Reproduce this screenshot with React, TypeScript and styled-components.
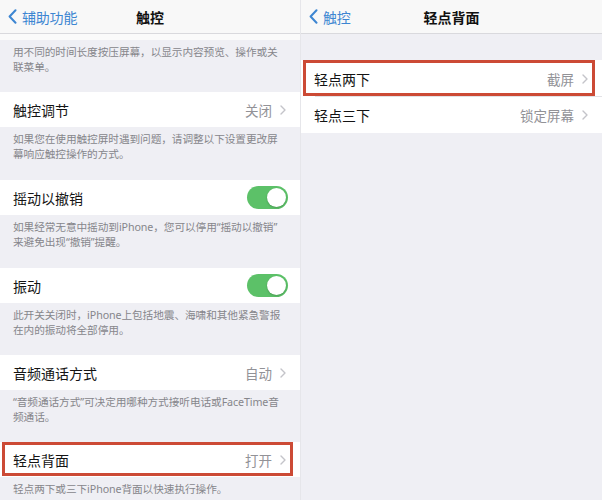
import React from "react";
import styled, { createGlobalStyle, css } from "styled-components";

const GlobalStyle = createGlobalStyle`
  html, body { margin: 0; padding: 0; }
  body {
    background: #efeff4;
    font-family: "Noto Sans", "Noto Sans CJK SC", "Liberation Sans", sans-serif;
    -webkit-font-smoothing: antialiased;
  }
`;

const Screen = styled.div`
  display: grid;
  grid-template-columns: 300px 1fr;
  column-gap: 1px;
  width: 602px;
  height: 500px;
  background: #e6e6ea;
  overflow: hidden;
`;

const Panel = styled.div`
  display: flex;
  flex-direction: column;
  background: #efeff4;
  height: 500px;
  overflow: hidden;
`;

const NavBar = styled.div`
  flex: 0 0 33px;
  display: grid;
  grid-template-columns: 1fr auto 1fr;
  align-items: center;
  padding: 0 8px;
  background: #f8f8f8;
  border-bottom: 1px solid #d9d9dd;
`;

const BackLink = styled.div`
  display: flex;
  align-items: center;
  gap: 5px;
  color: #3d86d2;
  font-size: 14px;
  letter-spacing: -0.2px;
`;

const NavTitle = styled.div`
  font-size: 14px;
  font-weight: 700;
  color: #111;
  text-align: center;
`;

const TopStrip = styled.div`
  flex: 0 0 6px;
  background: #fafafa;
`;

const Gap = styled.div<{ $h: number }>`
  flex: 0 0 ${(p) => p.$h}px;
`;

const Footer = styled.div<{ $h: number }>`
  flex: 0 0 ${(p) => p.$h}px;
  box-sizing: border-box;
  padding: 5px 13px 0 13px;
  font-size: 10.7px;
  line-height: 15px;
  color: #86868b;
  letter-spacing: -0.1px;
  white-space: nowrap;
`;

const highlight = css`
  &::after {
    content: "";
    position: absolute;
    left: 2px;
    right: 7px;
    top: 0;
    bottom: 1px;
    border: 3px solid #cc4a35;
    pointer-events: none;
  }
`;

const Row = styled.div<{ $h: number; $marked?: boolean; $divider?: boolean }>`
  position: relative;
  flex: 0 0 ${(p) => p.$h}px;
  box-sizing: border-box;
  display: flex;
  align-items: center;
  justify-content: space-between;
  padding: 0 14px 0 13px;
  background: #fff;
  ${(p) =>
    p.$divider &&
    css`
      &::before {
        content: "";
        position: absolute;
        left: 14px;
        right: 0;
        bottom: 0;
        height: 1px;
        background: #e2e2e6;
      }
    `}
  ${(p) => p.$marked && highlight}
`;

const Label = styled.span`
  font-size: 14px;
  color: #141414;
`;

const Value = styled.span`
  display: flex;
  align-items: center;
  gap: 8px;
  font-size: 13.5px;
  color: #929297;
`;

const Toggle = styled.div`
  position: relative;
  width: 41px;
  height: 23px;
  border-radius: 12px;
  background: #5cc168;
  margin-right: -2px;
  &::after {
    content: "";
    position: absolute;
    right: 2px;
    top: 2px;
    width: 19px;
    height: 19px;
    border-radius: 50%;
    background: #fff;
    box-shadow: 0 1px 2px rgba(0, 0, 0, 0.2);
  }
`;

const Chevron = () => (
  <svg width="6" height="10" viewBox="0 0 6 10" fill="none">
    <path d="M1 1l4 4-4 4" stroke="#c4c4c9" strokeWidth="1.4" strokeLinecap="round" strokeLinejoin="round" />
  </svg>
);

const BackChevron = () => (
  <svg width="9" height="15" viewBox="0 0 9 15" fill="none">
    <path d="M7.5 1.2L1.6 7.5l5.9 6.3" stroke="#3d86d2" strokeWidth="2" strokeLinecap="round" strokeLinejoin="round" />
  </svg>
);

const Nav = ({ back, title }: { back: string; title: string }) => (
  <NavBar>
    <BackLink>
      <BackChevron />
      {back}
    </BackLink>
    <NavTitle>{title}</NavTitle>
    <div />
  </NavBar>
);

const Disclosure = ({ text }: { text: string }) => (
  <Value>
    {text}
    <Chevron />
  </Value>
);

export default function App() {
  return (
    <>
      <GlobalStyle />
      <Screen>
        <Panel>
          <Nav back="辅助功能" title="触控" />
          <TopStrip />
          <Footer $h={52}>
            用不同的时间长度按压屏幕，以显示内容预览、操作或关
            <br />
            联菜单。
          </Footer>
          <Row $h={35}>
            <Label>触控调节</Label>
            <Disclosure text="关闭" />
          </Row>
          <Footer $h={53}>
            如果您在使用触控屏时遇到问题，请调整以下设置更改屏
            <br />
            幕响应触控操作的方式。
          </Footer>
          <Row $h={35}>
            <Label>摇动以撤销</Label>
            <Toggle />
          </Row>
          <Footer $h={53}>
            如果经常无意中摇动到iPhone，您可以停用“摇动以撤销”
            <br />
            来避免出现“撤销”提醒。
          </Footer>
          <Row $h={35}>
            <Label>振动</Label>
            <Toggle />
          </Row>
          <Footer $h={52}>
            此开关关闭时，iPhone上包括地震、海啸和其他紧急警报
            <br />
            在内的振动将全部停用。
          </Footer>
          <Row $h={35}>
            <Label>音频通话方式</Label>
            <Disclosure text="自动" />
          </Row>
          <Footer $h={52}>
            “音频通话方式”可决定用哪种方式接听电话或FaceTime音
            <br />
            频通话。
          </Footer>
          <Row $h={35} $marked>
            <Label>轻点背面</Label>
            <Disclosure text="打开" />
          </Row>
          <Footer $h={30}>轻点两下或三下iPhone背面以快速执行操作。</Footer>
        </Panel>
        <Panel>
          <Nav back="触控" title="轻点背面" />
          <Gap $h={26} />
          <Row $h={37} $marked $divider>
            <Label>轻点两下</Label>
            <Disclosure text="截屏" />
          </Row>
          <Row $h={36}>
            <Label>轻点三下</Label>
            <Disclosure text="锁定屏幕" />
          </Row>
        </Panel>
      </Screen>
    </>
  );
}
